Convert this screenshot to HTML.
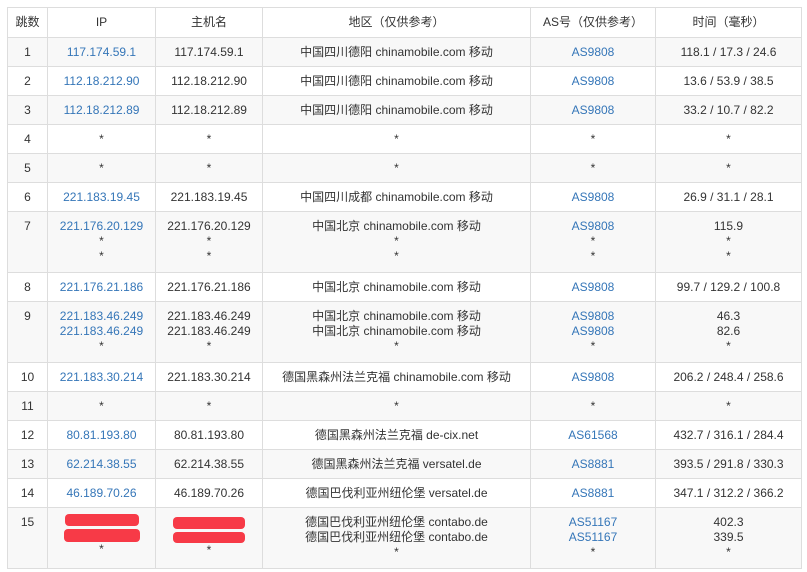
<!DOCTYPE html>
<html><head><meta charset="utf-8"><style>
body{margin:0;background:#fff;font-family:"Liberation Sans","Noto Sans CJK SC",sans-serif;font-size:12px;color:#333}
table{position:absolute;left:7px;top:7px;border-collapse:collapse;table-layout:fixed;width:794px}
td,th{border:1px solid #ddd;text-align:center;vertical-align:top;padding:7px 0 0;line-height:15px;overflow:hidden;white-space:nowrap}
th{font-weight:normal;padding-top:7px}
tr{height:29px}
tr.h{height:30px}
tr.t{height:61px}
tbody tr:nth-child(odd){background:#f8f8f8}
a{color:#3576b8;text-decoration:none}
.bar{display:block;background:#f73a47;border-radius:4px;margin:0 auto}
</style></head><body>
<table>
<colgroup><col style="width:40px"><col style="width:108px"><col style="width:107px"><col style="width:268px"><col style="width:125px"><col style="width:146px"></colgroup>
<thead><tr class="h"><th>跳数</th><th>IP</th><th>主机名</th><th>地区（仅供参考）</th><th>AS号（仅供参考）</th><th>时间（毫秒）</th></tr></thead>
<tbody>
<tr><td>1</td><td><a>117.174.59.1</a></td><td>117.174.59.1</td><td>中国四川德阳 chinamobile.com 移动</td><td><a>AS9808</a></td><td>118.1 / 17.3 / 24.6</td></tr>
<tr><td>2</td><td><a>112.18.212.90</a></td><td>112.18.212.90</td><td>中国四川德阳 chinamobile.com 移动</td><td><a>AS9808</a></td><td>13.6 / 53.9 / 38.5</td></tr>
<tr><td>3</td><td><a>112.18.212.89</a></td><td>112.18.212.89</td><td>中国四川德阳 chinamobile.com 移动</td><td><a>AS9808</a></td><td>33.2 / 10.7 / 82.2</td></tr>
<tr><td>4</td><td>*</td><td>*</td><td>*</td><td>*</td><td>*</td></tr>
<tr><td>5</td><td>*</td><td>*</td><td>*</td><td>*</td><td>*</td></tr>
<tr><td>6</td><td><a>221.183.19.45</a></td><td>221.183.19.45</td><td>中国四川成都 chinamobile.com 移动</td><td><a>AS9808</a></td><td>26.9 / 31.1 / 28.1</td></tr>
<tr class="t"><td>7</td><td><a>221.176.20.129</a><br>*<br>*</td><td>221.176.20.129<br>*<br>*</td><td>中国北京 chinamobile.com 移动<br>*<br>*</td><td><a>AS9808</a><br>*<br>*</td><td>115.9<br>*<br>*</td></tr>
<tr><td>8</td><td><a>221.176.21.186</a></td><td>221.176.21.186</td><td>中国北京 chinamobile.com 移动</td><td><a>AS9808</a></td><td>99.7 / 129.2 / 100.8</td></tr>
<tr class="t"><td>9</td><td><a>221.183.46.249</a><br><a>221.183.46.249</a><br>*</td><td>221.183.46.249<br>221.183.46.249<br>*</td><td>中国北京 chinamobile.com 移动<br>中国北京 chinamobile.com 移动<br>*</td><td><a>AS9808</a><br><a>AS9808</a><br>*</td><td>46.3<br>82.6<br>*</td></tr>
<tr><td>10</td><td><a>221.183.30.214</a></td><td>221.183.30.214</td><td>德国黑森州法兰克福 chinamobile.com 移动</td><td><a>AS9808</a></td><td>206.2 / 248.4 / 258.6</td></tr>
<tr><td>11</td><td>*</td><td>*</td><td>*</td><td>*</td><td>*</td></tr>
<tr><td>12</td><td><a>80.81.193.80</a></td><td>80.81.193.80</td><td>德国黑森州法兰克福 de-cix.net</td><td><a>AS61568</a></td><td>432.7 / 316.1 / 284.4</td></tr>
<tr><td>13</td><td><a>62.214.38.55</a></td><td>62.214.38.55</td><td>德国黑森州法兰克福 versatel.de</td><td><a>AS8881</a></td><td>393.5 / 291.8 / 330.3</td></tr>
<tr><td>14</td><td><a>46.189.70.26</a></td><td>46.189.70.26</td><td>德国巴伐利亚州纽伦堡 versatel.de</td><td><a>AS8881</a></td><td>347.1 / 312.2 / 366.2</td></tr>
<tr class="t"><td>15</td><td style="padding-top:6px"><span class="bar" style="width:74px;height:12px;margin-bottom:3px"></span><span class="bar" style="width:76px;height:13px"></span><div style="line-height:15px">*</div></td><td style="padding-top:9px"><span class="bar" style="width:72px;height:12px;margin-bottom:3px"></span><span class="bar" style="width:72px;height:11px"></span><div style="line-height:15px">*</div></td><td>德国巴伐利亚州纽伦堡 contabo.de<br>德国巴伐利亚州纽伦堡 contabo.de<br>*</td><td><a>AS51167</a><br><a>AS51167</a><br>*</td><td>402.3<br>339.5<br>*</td></tr>
</tbody></table>
</body></html>
